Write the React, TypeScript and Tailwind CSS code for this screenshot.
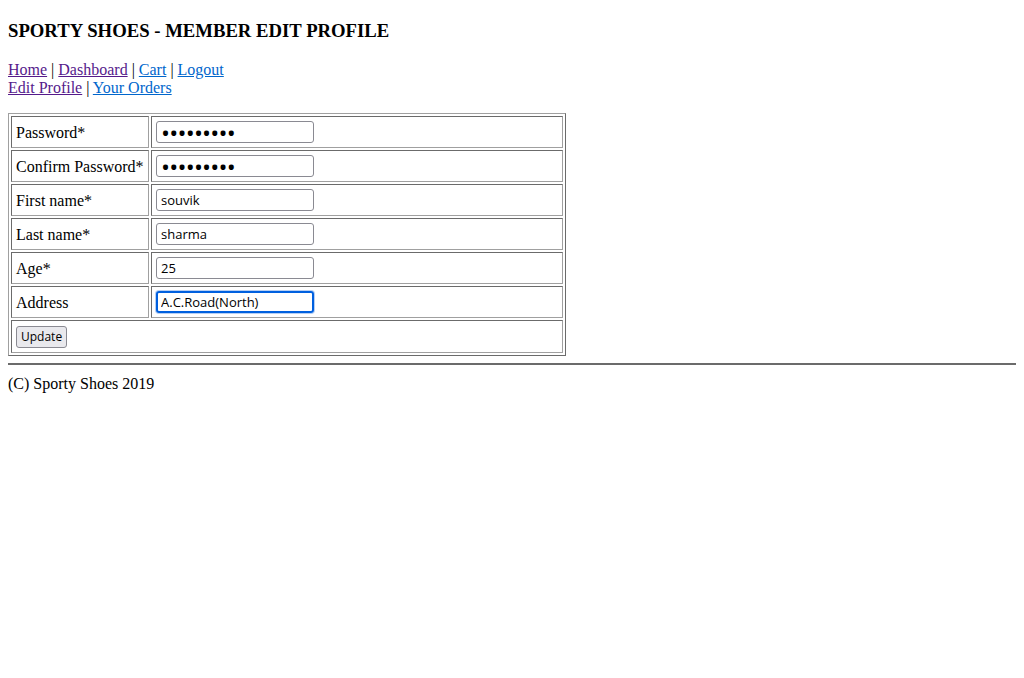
import { useState } from 'react';

const fields = [
  { label: 'Password*', type: 'password', value: 'secret123' },
  { label: 'Confirm Password*', type: 'password', value: 'secret123' },
  { label: 'First name*', type: 'text', value: 'souvik' },
  { label: 'Last name*', type: 'text', value: 'sharma' },
  { label: 'Age*', type: 'text', value: '25' },
  { label: 'Address', type: 'text', value: 'A.C.Road(North)', focused: true },
];

const cell =
  'border border-t-[#6b6b6b] border-l-[#6b6b6b] border-b-[#a0a0a0] border-r-[#a0a0a0] px-[4px] align-middle';

const App = () => {
  const [values, setValues] = useState(fields.map((f) => f.value));

  const inputClass = (f: (typeof fields)[number]) => {
    const size = f.type === 'password' ? 'text-[24px] tracking-[-0.8px] leading-[18px]' : 'text-[13px]';
    return f.focused
      ? `block h-[22px] w-[158px] rounded-[3px] border-2 border-[#0060df] px-[3px] font-['Open_Sans',sans-serif] ${size} text-black shadow-[0_0_0_1px_#b7cff3] outline-none`
      : `block h-[22px] w-[158px] rounded-[3px] border border-[#8a8a92] px-[4px] font-['Open_Sans',sans-serif] ${size} text-black outline-none`;
  };

  return (
    <div className="m-[8px] font-['Liberation_Serif',serif] text-[16px] leading-[18px] text-black">
      <h3 className="mt-[20px] mb-[19px] text-[18.72px] font-bold leading-[22px]">SPORTY SHOES - MEMBER EDIT PROFILE</h3>
      <div className="mb-[16px]">
        <a href="#" className="text-[#551a8b] underline">Home</a> |{' '}
        <a href="#" className="text-[#551a8b] underline">Dashboard</a> |{' '}
        <a href="#" className="text-[#0066cc] underline">Cart</a> |{' '}
        <a href="#" className="text-[#0066cc] underline">Logout</a>
        <br />
        <a href="#" className="text-[#551a8b] underline">Edit Profile</a> |{' '}
        <a href="#" className="text-[#0066cc] underline">Your Orders</a>
      </div>
      <table className="w-[558px] border-separate border-spacing-[2px] border border-t-[#a0a0a0] border-l-[#a0a0a0] border-b-[#6b6b6b] border-r-[#6b6b6b]">
        <tbody>
          {fields.map((f, i) => (
            <tr key={f.label}>
              <td className={`${cell} pt-[5px] pb-[3px] w-[138px] whitespace-nowrap`}>{f.label}</td>
              <td className={`${cell} py-[4px]`}>
                <input
                  type={f.type}
                  value={values[i]}
                  onChange={(e) => setValues(values.map((v, j) => (j === i ? e.target.value : v)))}
                  className={inputClass(f)}
                />
              </td>
            </tr>
          ))}
          <tr>
            <td colSpan={2} className={`${cell} h-[33px] py-[4px]`}>
              <button className="block h-[22px] rounded-[3px] border border-[#8a8a92] bg-[#e9e9ed] px-[4px] font-['Open_Sans',sans-serif] text-[12px] leading-[17px] text-black">
                Update
              </button>
            </td>
          </tr>
        </tbody>
      </table>
      <hr className="mt-[7px] mb-[10px] border-t-[2px] border-t-[#6b6b6b]" />
      <div>(C) Sporty Shoes 2019</div>
    </div>
  );
};

export default App;
